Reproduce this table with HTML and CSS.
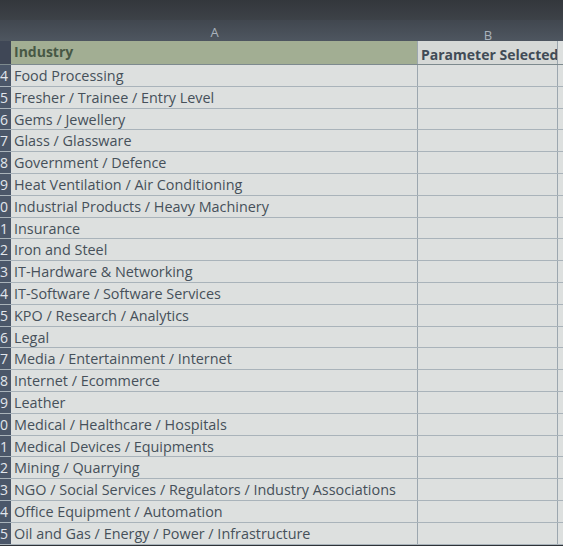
FILE: index.html
```html
<!DOCTYPE html>
<html>
<head>
<meta charset="utf-8">
<link rel="stylesheet" href="styles.css">
</head>
<body>
<div class="screen">
  <div class="topbar"></div>
  <div class="colheads">
    <div class="rn"></div>
    <div class="colA">A</div>
    <div class="colB">B</div>
    <div class="colC"></div>
  </div>
  <div class="sheet">
    <div class="row head">
      <div class="rn">13</div>
      <div class="cell a hA">Industry</div>
      <div class="cell b hB">Parameter Selected</div>
      <div class="cell c"></div>
    </div>
    <div class="row"><div class="rn">14</div><div class="cell a">Food Processing</div><div class="cell b"></div><div class="cell c"></div></div>
    <div class="row"><div class="rn">15</div><div class="cell a">Fresher / Trainee / Entry Level</div><div class="cell b"></div><div class="cell c"></div></div>
    <div class="row"><div class="rn">16</div><div class="cell a">Gems / Jewellery</div><div class="cell b"></div><div class="cell c"></div></div>
    <div class="row"><div class="rn">17</div><div class="cell a">Glass / Glassware</div><div class="cell b"></div><div class="cell c"></div></div>
    <div class="row"><div class="rn">18</div><div class="cell a">Government / Defence</div><div class="cell b"></div><div class="cell c"></div></div>
    <div class="row"><div class="rn">19</div><div class="cell a">Heat Ventilation / Air Conditioning</div><div class="cell b"></div><div class="cell c"></div></div>
    <div class="row"><div class="rn">20</div><div class="cell a">Industrial Products / Heavy Machinery</div><div class="cell b"></div><div class="cell c"></div></div>
    <div class="row"><div class="rn">21</div><div class="cell a">Insurance</div><div class="cell b"></div><div class="cell c"></div></div>
    <div class="row"><div class="rn">22</div><div class="cell a">Iron and Steel</div><div class="cell b"></div><div class="cell c"></div></div>
    <div class="row"><div class="rn">23</div><div class="cell a">IT-Hardware &amp; Networking</div><div class="cell b"></div><div class="cell c"></div></div>
    <div class="row"><div class="rn">24</div><div class="cell a">IT-Software / Software Services</div><div class="cell b"></div><div class="cell c"></div></div>
    <div class="row"><div class="rn">25</div><div class="cell a">KPO / Research / Analytics</div><div class="cell b"></div><div class="cell c"></div></div>
    <div class="row"><div class="rn">26</div><div class="cell a">Legal</div><div class="cell b"></div><div class="cell c"></div></div>
    <div class="row"><div class="rn">27</div><div class="cell a">Media / Entertainment / Internet</div><div class="cell b"></div><div class="cell c"></div></div>
    <div class="row"><div class="rn">28</div><div class="cell a">Internet / Ecommerce</div><div class="cell b"></div><div class="cell c"></div></div>
    <div class="row"><div class="rn">29</div><div class="cell a">Leather</div><div class="cell b"></div><div class="cell c"></div></div>
    <div class="row"><div class="rn">30</div><div class="cell a">Medical / Healthcare / Hospitals</div><div class="cell b"></div><div class="cell c"></div></div>
    <div class="row"><div class="rn">31</div><div class="cell a">Medical Devices / Equipments</div><div class="cell b"></div><div class="cell c"></div></div>
    <div class="row"><div class="rn">32</div><div class="cell a">Mining / Quarrying</div><div class="cell b"></div><div class="cell c"></div></div>
    <div class="row"><div class="rn">33</div><div class="cell a">NGO / Social Services / Regulators / Industry Associations</div><div class="cell b"></div><div class="cell c"></div></div>
    <div class="row"><div class="rn">34</div><div class="cell a">Office Equipment / Automation</div><div class="cell b"></div><div class="cell c"></div></div>
    <div class="row"><div class="rn">35</div><div class="cell a">Oil and Gas / Energy / Power / Infrastructure</div><div class="cell b"></div><div class="cell c"></div></div>
  </div>
</div>
</body>
</html>
```

FILE: styles.css
```css
html, body {
  margin: 0;
  padding: 0;
  background: #2f3338;
  overflow: hidden;
}
.screen {
  width: 563px;
  height: 546px;
  overflow: hidden;
  font-family: "Open Sans", "Liberation Sans", sans-serif;
}
.topbar {
  height: 20px;
  background: linear-gradient(#33373c, #3d4248);
}
.colheads {
  display: flex;
  height: 21px;
  background: linear-gradient(#41474f, #4e5660);
  color: #aab3bd;
  font-size: 13px;
  line-height: 24px;
}
.colheads .rn { width: 11px; flex: none; background: transparent; }
.colA { width: 407px; flex: none; text-align: center; }
.colB { width: 140px; flex: none; text-align: center; padding-top: 3px; }
.colC { flex: 1; }
.sheet {
  display: flex;
  flex-direction: column;
  background: #dde0df;
}
.row {
  display: flex;
  height: 21.8px;
  box-sizing: border-box;
  border-bottom: 1px solid #a9b3ba;
}
.row.head {
  height: 24px;
  border-bottom: 1px solid #7d8a8e;
}
.rn {
  width: 11px;
  flex: none;
  box-sizing: border-box;
  padding-right: 3px;
  background: #4b5769;
  color: #e2e6ec;
  font-size: 14px;
  line-height: 21px;
  text-align: right;
  overflow: hidden;
  white-space: nowrap;
  direction: rtl;
}
.cell {
  box-sizing: border-box;
  flex: none;
  color: #46505a;
  font-size: 14.4px;
  line-height: 21px;
  white-space: nowrap;
  overflow: hidden;
}
.cell.a {
  width: 407px;
  padding-left: 3px;
  border-right: 1px solid #9ca7af;
}
.cell.b {
  width: 140px;
  border-right: 1px solid #9ca7af;
}
.cell.c { flex: 1; }
.hA {
  background: #a2ae93;
  color: #475845;
  font-weight: 700;
  font-size: 14px;
  line-height: 22px;
}
.hB {
  background: #d6d9d7;
  color: #414b56;
  font-weight: 700;
  font-size: 14px;
  line-height: 28px;
  padding-left: 3px;
}
.head .rn { background: #3f4756; color: transparent; }
```
